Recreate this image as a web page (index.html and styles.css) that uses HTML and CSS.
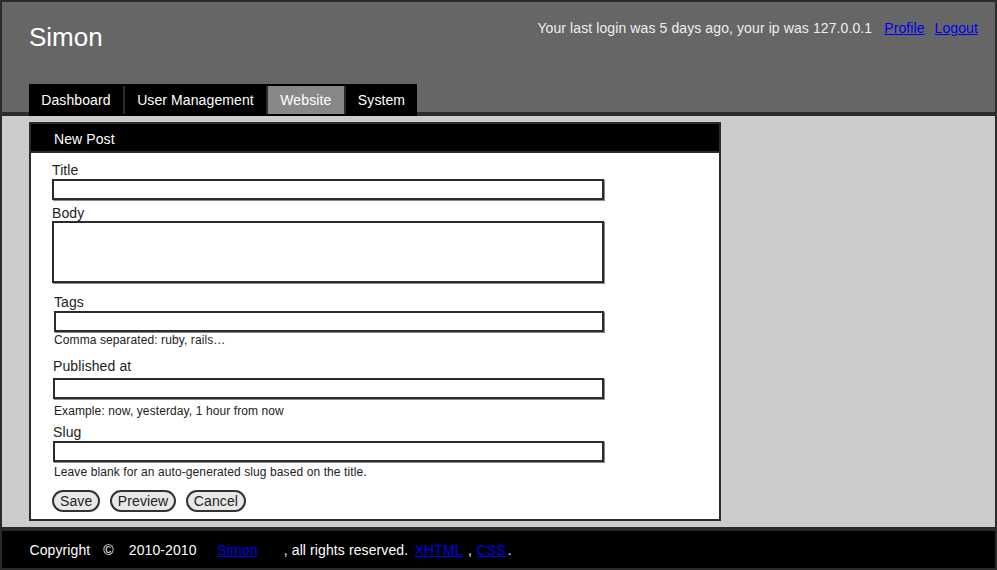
FILE: index.html
```html
<!DOCTYPE html>
<html>
<head>
<meta charset="utf-8">
<title>Simon - New Post</title>
<link rel="stylesheet" href="styles.css">
</head>
<body>
<div class="page">
  <header class="header">
    <div class="header-top">
      <h1 class="logo">Simon</h1>
      <div class="userbar">
        <span class="login-info">Your last login was 5 days ago, your ip was 127.0.0.1</span>
        <a href="#" class="ulink ulink-profile">Profile</a>
        <a href="#" class="ulink ulink-logout">Logout</a>
      </div>
    </div>
    <ul class="tabs">
      <li class="tab"><a href="#">Dashboard</a></li>
      <li class="tab"><a href="#">User Management</a></li>
      <li class="tab tab-active"><a href="#">Website</a></li>
      <li class="tab"><a href="#">System</a></li>
    </ul>
  </header>

  <main class="main">
    <section class="panel">
      <h2 class="panel-title">New Post</h2>
      <form class="panel-body">
        <label class="lbl lbl-title">Title</label>
        <input class="text in-title" type="text">

        <label class="lbl lbl-body">Body</label>
        <textarea class="text in-body"></textarea>

        <label class="lbl lbl-tags">Tags</label>
        <input class="text in-tags" type="text">
        <p class="hint hint-tags">Comma separated: ruby, rails…</p>

        <label class="lbl lbl-pub">Published at</label>
        <input class="text in-pub" type="text">
        <p class="hint hint-pub">Example: now, yesterday, 1 hour from now</p>

        <label class="lbl lbl-slug">Slug</label>
        <input class="text in-slug" type="text">
        <p class="hint hint-slug">Leave blank for an auto-generated slug based on the title.</p>

        <div class="actions">
          <button type="button" class="btn">Save</button>
          <button type="button" class="btn">Preview</button>
          <button type="button" class="btn">Cancel</button>
        </div>
      </form>
    </section>
  </main>

  <footer class="footer">
    <span class="f-copy">Copyright</span>
    <span class="f-sym">©</span>
    <span class="f-year">2010-2010</span>
    <a href="#" class="f-link f-simon">Simon</a>
    <span class="f-rights">, all rights reserved.</span>
    <a href="#" class="f-link f-xhtml">XHTML</a>
    <span class="f-comma">,</span>
    <a href="#" class="f-link f-css">CSS</a>
    <span class="f-dot">.</span>
  </footer>
</div>
</body>
</html>
```

FILE: styles.css
```css
* { box-sizing: border-box; }

html, body {
  margin: 0;
  padding: 0;
}

body {
  font-family: "Liberation Sans", Arial, sans-serif;
  font-size: 14px;
  letter-spacing: 0.1px;
  color: #222;
  background: #2b2b2b;
}

.page {
  width: 997px;
  height: 570px;
  border: 2px solid #2b2b2b;
  display: flex;
  flex-direction: column;
  overflow: hidden;
}

/* Header */
.header {
  height: 114px;
  flex: none;
  padding: 0 17px 0 27px;
  display: flex;
  flex-direction: column;
  background: linear-gradient(#666 0, #666 110px, #2b2b2b 110px);
}

.header-top {
  display: flex;
  justify-content: space-between;
  align-items: flex-start;
}

.logo {
  margin: 20px 0 0;
  font-size: 26px;
  line-height: 30px;
  font-weight: normal;
  letter-spacing: 0;
  color: #fff;
}

.userbar {
  margin-top: 17px;
  display: flex;
  line-height: 18px;
  font-size: 14px;
  color: #eee;
}

.ulink {
  color: #0000ee;
  text-decoration: underline;
}

.ulink-profile { margin-left: 12px; }
.ulink-logout { margin-left: 10px; }

.tabs {
  margin: auto 0 0;
  padding: 2px 0;
  list-style: none;
  display: flex;
  align-self: flex-start;
  background: #000;
}

.tab + .tab {
  border-left: 2px solid #2b2b2b;
}

.tab a {
  display: block;
  padding: 0 12.25px;
  line-height: 28px;
  color: #fff;
  text-decoration: none;
}

.tab-active a {
  background: #888;
}

/* Main */
.main {
  flex: 1;
  min-height: 0;
  background: #ccc;
  padding: 6px 27px;
}

.panel {
  width: 692px;
  border: 2px solid #2b2b2b;
  background: #fff;
}

.panel-title {
  margin: 0;
  padding: 7px 23px 4px;
  font-size: 14px;
  line-height: 16px;
  font-weight: normal;
  color: #fff;
  background: #000;
  border-bottom: 2px solid #2b2b2b;
}

.panel-body {
  margin: 0;
  padding: 9px 0 7px 21px;
  display: flex;
  flex-direction: column;
  align-items: flex-start;
}

.lbl {
  display: block;
  font-size: 14px;
  line-height: 16px;
  color: #222;
}

.text {
  display: block;
  height: 21px;
  margin: 0;
  padding: 0 3px;
  border: 2px solid #2b2b2b;
  box-shadow: 1px 1px 0 #8a8a8a;
  background: #fff;
  font-family: "Liberation Sans", Arial, sans-serif;
  font-size: 14px;
  outline: none;
}

.in-title { width: 552px; margin-top: 1px; }

.lbl-body { margin-top: 5px; }
.in-body { width: 552px; height: 62px; resize: none; }

.lbl-tags { margin-top: 11px; margin-left: 2px; }
.in-tags { width: 550px; margin-top: 1px; margin-left: 2px; }

.hint {
  margin: 0;
  font-size: 12px;
  line-height: 14px;
  color: #222;
}

.hint-tags { margin-top: 1px; margin-left: 2px; }

.lbl-pub { margin-top: 11px; margin-left: 1px; }
.in-pub { width: 551px; margin-top: 4px; margin-left: 1px; }
.hint-pub { margin-top: 5px; margin-left: 2px; }

.lbl-slug { margin-top: 6px; margin-left: 1px; }
.in-slug { width: 551px; margin-top: 1px; margin-left: 1px; }
.hint-slug { margin-top: 3px; margin-left: 2px; }

.actions {
  margin-top: 11px;
  display: flex;
  gap: 9.5px;
}

.btn {
  height: 22px;
  margin: 0;
  padding: 0 6px;
  border: 2px solid #333;
  border-radius: 11px;
  background: #e8e8e8;
  font-family: "Liberation Sans", Arial, sans-serif;
  font-size: 14px;
  letter-spacing: 0.1px;
  line-height: 18px;
  color: #222;
}

/* Footer */
.footer {
  flex: none;
  height: 41px;
  border-top: 4px solid #2b2b2b;
  background: #000;
  color: #fff;
  display: flex;
  align-items: center;
  padding: 2px 0 0 27.5px;
  font-size: 14px;
  line-height: 35px;
  white-space: pre;
}

.f-link {
  color: #0000ee;
  text-decoration: underline;
}

.f-sym { margin-left: 13px; }
.f-year { margin-left: 15px; }
.f-simon { margin-left: 21px; }
.f-rights { margin-left: 26px; }
.f-xhtml { margin-left: 6.5px; }
.f-comma { margin-left: 5.5px; }
.f-css { margin-left: 4.5px; }
.f-dot { margin-left: 2px; }
```
